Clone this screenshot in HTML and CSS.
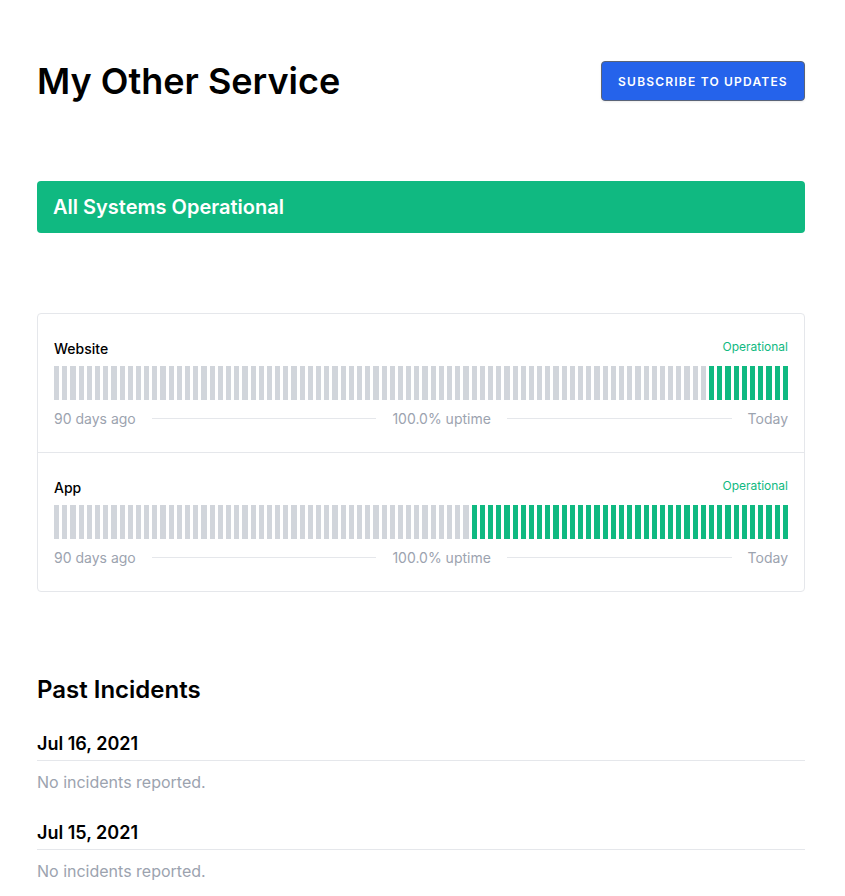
FILE: index.html
```html
<!DOCTYPE html>
<html lang="en">
<head>
<meta charset="utf-8">
<title>My Other Service</title>
<link rel="stylesheet" href="styles.css">
</head>
<body>
<main class="page">
  <header class="header">
    <h1 class="title">My Other Service</h1>
    <button class="subscribe">Subscribe to updates</button>
  </header>

  <div class="banner">All Systems Operational</div>

  <section class="card">
    <div class="service">
      <div class="service-head">
        <span class="service-name">Website</span>
        <span class="service-status">Operational</span>
      </div>
      <div class="bars">
        <i class="bar"></i><i class="bar"></i><i class="bar"></i><i class="bar"></i><i class="bar"></i><i class="bar"></i><i class="bar"></i><i class="bar"></i><i class="bar"></i><i class="bar"></i>
        <i class="bar"></i><i class="bar"></i><i class="bar"></i><i class="bar"></i><i class="bar"></i><i class="bar"></i><i class="bar"></i><i class="bar"></i><i class="bar"></i><i class="bar"></i>
        <i class="bar"></i><i class="bar"></i><i class="bar"></i><i class="bar"></i><i class="bar"></i><i class="bar"></i><i class="bar"></i><i class="bar"></i><i class="bar"></i><i class="bar"></i>
        <i class="bar"></i><i class="bar"></i><i class="bar"></i><i class="bar"></i><i class="bar"></i><i class="bar"></i><i class="bar"></i><i class="bar"></i><i class="bar"></i><i class="bar"></i>
        <i class="bar"></i><i class="bar"></i><i class="bar"></i><i class="bar"></i><i class="bar"></i><i class="bar"></i><i class="bar"></i><i class="bar"></i><i class="bar"></i><i class="bar"></i>
        <i class="bar"></i><i class="bar"></i><i class="bar"></i><i class="bar"></i><i class="bar"></i><i class="bar"></i><i class="bar"></i><i class="bar"></i><i class="bar"></i><i class="bar"></i>
        <i class="bar"></i><i class="bar"></i><i class="bar"></i><i class="bar"></i><i class="bar"></i><i class="bar"></i><i class="bar"></i><i class="bar"></i><i class="bar"></i><i class="bar"></i>
        <i class="bar"></i><i class="bar"></i><i class="bar"></i><i class="bar"></i><i class="bar"></i><i class="bar"></i><i class="bar"></i><i class="bar"></i><i class="bar"></i><i class="bar"></i>
        <i class="bar up"></i><i class="bar up"></i><i class="bar up"></i><i class="bar up"></i><i class="bar up"></i><i class="bar up"></i><i class="bar up"></i><i class="bar up"></i><i class="bar up"></i><i class="bar up"></i>
      </div>
      <div class="legend">
        <span>90 days ago</span>
        <span class="rule"></span>
        <span>100.0% uptime</span>
        <span class="rule"></span>
        <span>Today</span>
      </div>
    </div>

    <div class="service">
      <div class="service-head">
        <span class="service-name">App</span>
        <span class="service-status">Operational</span>
      </div>
      <div class="bars">
        <i class="bar"></i><i class="bar"></i><i class="bar"></i><i class="bar"></i><i class="bar"></i><i class="bar"></i><i class="bar"></i><i class="bar"></i><i class="bar"></i><i class="bar"></i>
        <i class="bar"></i><i class="bar"></i><i class="bar"></i><i class="bar"></i><i class="bar"></i><i class="bar"></i><i class="bar"></i><i class="bar"></i><i class="bar"></i><i class="bar"></i>
        <i class="bar"></i><i class="bar"></i><i class="bar"></i><i class="bar"></i><i class="bar"></i><i class="bar"></i><i class="bar"></i><i class="bar"></i><i class="bar"></i><i class="bar"></i>
        <i class="bar"></i><i class="bar"></i><i class="bar"></i><i class="bar"></i><i class="bar"></i><i class="bar"></i><i class="bar"></i><i class="bar"></i><i class="bar"></i><i class="bar"></i>
        <i class="bar"></i><i class="bar"></i><i class="bar"></i><i class="bar"></i><i class="bar"></i><i class="bar"></i><i class="bar"></i><i class="bar"></i><i class="bar"></i><i class="bar"></i>
        <i class="bar"></i><i class="bar up"></i><i class="bar up"></i><i class="bar up"></i><i class="bar up"></i><i class="bar up"></i><i class="bar up"></i><i class="bar up"></i><i class="bar up"></i><i class="bar up"></i>
        <i class="bar up"></i><i class="bar up"></i><i class="bar up"></i><i class="bar up"></i><i class="bar up"></i><i class="bar up"></i><i class="bar up"></i><i class="bar up"></i><i class="bar up"></i><i class="bar up"></i>
        <i class="bar up"></i><i class="bar up"></i><i class="bar up"></i><i class="bar up"></i><i class="bar up"></i><i class="bar up"></i><i class="bar up"></i><i class="bar up"></i><i class="bar up"></i><i class="bar up"></i>
        <i class="bar up"></i><i class="bar up"></i><i class="bar up"></i><i class="bar up"></i><i class="bar up"></i><i class="bar up"></i><i class="bar up"></i><i class="bar up"></i><i class="bar up"></i><i class="bar up"></i>
      </div>
      <div class="legend">
        <span>90 days ago</span>
        <span class="rule"></span>
        <span>100.0% uptime</span>
        <span class="rule"></span>
        <span>Today</span>
      </div>
    </div>
  </section>

  <section class="incidents">
    <h2 class="incidents-title">Past Incidents</h2>
    <div class="day">
      <h3 class="day-date">Jul 16, 2021</h3>
      <p class="day-empty">No incidents reported.</p>
    </div>
    <div class="day">
      <h3 class="day-date">Jul 15, 2021</h3>
      <p class="day-empty">No incidents reported.</p>
    </div>
  </section>
</main>
</body>
</html>
```

FILE: styles.css
```css
* { box-sizing: border-box; }

html, body {
  margin: 0;
  padding: 0;
  background: #fff;
}

body {
  font-family: Inter, "Noto Sans", sans-serif;
  color: #111;
}

.page {
  width: 768px;
  margin: 0 0 0 37px;
  padding-top: 61px;
}

.header {
  display: flex;
  align-items: center;
  justify-content: space-between;
  height: 40px;
}

.title {
  margin: 0;
  font-size: 36px;
  line-height: 40px;
  font-weight: 600;
  color: #000;
}

.subscribe {
  height: 40px;
  width: 204px;
  padding: 0;
  background: #2563eb;
  color: #fff;
  border: 1px solid #5a6478;
  border-radius: 4px;
  font-family: Inter, sans-serif;
  font-size: 12px;
  font-weight: 600;
  letter-spacing: 0.1em;
  text-transform: uppercase;
  box-shadow: 0 1px 2px rgba(0, 0, 0, 0.08);
}

.banner {
  margin-top: 80px;
  height: 52px;
  display: flex;
  align-items: center;
  padding: 0 16px;
  background: #10b981;
  color: #fff;
  border-radius: 4px;
  font-size: 20px;
  font-weight: 600;
}

.card {
  margin-top: 80px;
  border: 1px solid #e5e7eb;
  border-radius: 4px;
}

.service {
  padding: 24px 16px;
}

.service + .service {
  border-top: 1px solid #e5e7eb;
}

.service-head {
  display: flex;
  justify-content: space-between;
  align-items: center;
  height: 20px;
}

.service-name {
  font-size: 14px;
  font-weight: 500;
  color: #000;
}

.service-status {
  font-size: 12px;
  color: #10b981;
  margin-top: -4px;
}

.bars {
  margin-top: 8px;
  height: 34px;
  display: flex;
  gap: 3px;
}

.bar {
  flex: 1 1 0;
  background: #d1d5db;
}

.bar.up {
  background: #10b981;
}

.legend {
  margin-top: 8px;
  display: flex;
  align-items: center;
  gap: 16px;
  height: 20px;
  font-size: 14px;
  color: #9ca3af;
}

.rule {
  flex: 1 1 0;
  height: 1px;
  background: #e5e7eb;
}

.incidents {
  margin-top: 82px;
}

.incidents-title {
  margin: 0;
  font-size: 24px;
  line-height: 32px;
  font-weight: 600;
  color: #000;
}

.day {
  margin-top: 24px;
}

.day + .day {
  margin-top: 25px;
}

.day-date {
  margin: 0;
  font-size: 18px;
  line-height: 28px;
  font-weight: 600;
  color: #000;
  padding-bottom: 2px;
  border-bottom: 1px solid #e5e7eb;
}

.day-empty {
  margin: 9px 0 0;
  font-size: 16px;
  line-height: 24px;
  color: #9ca3af;
}
```
